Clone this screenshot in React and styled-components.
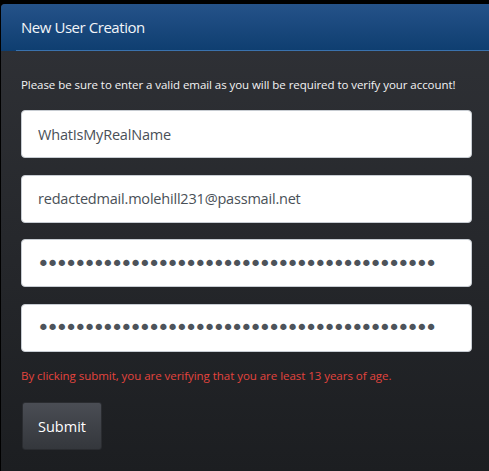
import React from "react";
import styled, { createGlobalStyle } from "styled-components";

const Global = createGlobalStyle`
  html, body { margin: 0; padding: 0; background: #000; }
  body { width: 489px; height: 471px; overflow: hidden; }
  * { box-sizing: border-box; }
`;

const Panel = styled.section`
  margin: 4px 0 0 1px;
  height: 467px;
  border-top-left-radius: 4px;
  overflow: hidden;
  background: linear-gradient(to bottom, #303237 0%, #25272b 55%, #1c1e21 100%);
  font-family: "Open Sans", "Noto Sans", sans-serif;
`;

const Header = styled.header`
  height: 47px;
  display: flex;
  flex-direction: column;
  background: linear-gradient(to bottom, #255289 0%, #0e3e70 100%);
`;

const Title = styled.h1`
  flex: 1;
  margin: 0;
  padding: 0 0 0 20px;
  display: flex;
  align-items: center;
  font-size: 15px;
  font-weight: 400;
  letter-spacing: -0.45px;
  color: #f2f5f8;
`;

const Rule = styled.div`
  height: 1px;
  margin-left: 15px;
  background: #3a72ad;
`;

const Body = styled.div`
  padding: 26px 17px 0 20px;
  display: flex;
  flex-direction: column;
`;

const Notice = styled.p`
  margin: 0 0 17px;
  font-size: 11.5px;
  line-height: 16px;
  letter-spacing: -0.06px;
  color: #f3f3f3;
`;

const Field = styled.input`
  display: block;
  width: 451px;
  height: 48px;
  margin: 0 0 16.5px;
  padding: 0 16px;
  border: 1px solid #c7ccd2;
  border-radius: 4px;
  background: #fff;
  font-family: "Open Sans", "Noto Sans", sans-serif;
  font-size: 14.5px;
  letter-spacing: -0.2px;
  color: #495057;
  outline: none;
`;

const SecretField = styled(Field)`
  font-family: "DejaVu Sans", sans-serif;
  font-size: 21.5px;
  letter-spacing: -3.45px;
  padding-left: 15px;
  color: #4d535a;
`;

const Warning = styled.p`
  margin: 0 0 18px;
  font-size: 11.5px;
  line-height: 16px;
  letter-spacing: -0.04px;
  color: #e4443e;
`;

const SubmitButton = styled.button`
  width: 80px;
  height: 48px;
  margin-left: 1px;
  border: 1px solid #2a2c30;
  border-radius: 3px;
  background: linear-gradient(to bottom, #4a4d54 0%, #34373c 100%);
  color: #fff;
  font-family: "Open Sans", "Noto Sans", sans-serif;
  font-size: 14.5px;
  padding: 0;
  cursor: pointer;
`;

const pw = "x".repeat(43);

export default function App() {
  return (
    <>
      <Global />
      <Panel>
        <Header>
          <Title>New User Creation</Title>
          <Rule />
        </Header>
        <Body>
          <Notice>
            Please be sure to enter a valid email as you will be required to verify your account!
          </Notice>
          <Field type="text" value="WhatIsMyRealName" readOnly />
          <Field type="email" value="redactedmail.molehill231@passmail.net" readOnly />
          <SecretField type="password" value={pw} readOnly />
          <SecretField type="password" value={pw} readOnly />
          <Warning>
            By clicking submit, you are verifying that you are least 13 years of age.
          </Warning>
          <SubmitButton type="button">Submit</SubmitButton>
        </Body>
      </Panel>
    </>
  );
}
